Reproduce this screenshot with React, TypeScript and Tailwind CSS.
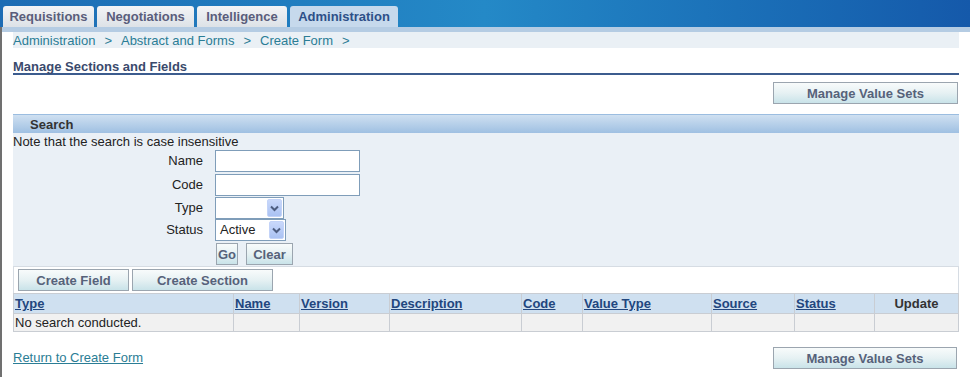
import React from "react";

const tabs = [
  { label: "Requisitions", w: "w-[91px]" },
  { label: "Negotiations", w: "w-[97px]" },
  { label: "Intelligence", w: "w-[90px]" },
];

const crumbs = ["Administration", "Abstract and Forms", "Create Form"];

const cols = [
  { label: "Type", w: "w-[219px]", link: true },
  { label: "Name", w: "w-[66px]", link: true },
  { label: "Version", w: "w-[90px]", link: true },
  { label: "Description", w: "w-[132px]", link: true },
  { label: "Code", w: "w-[61px]", link: true },
  { label: "Value Type", w: "w-[129px]", link: true },
  { label: "Source", w: "w-[83px]", link: true },
  { label: "Status", w: "w-[80px]", link: true },
  { label: "Update", w: "flex-1", link: false },
];

function Btn({ children, className = "" }: { children: React.ReactNode; className?: string }) {
  return (
    <button
      className={`h-[22px] border border-[#9ba5af] bg-linear-to-b from-[#f8fbfb] via-[#e6f1f3] to-[#c9e3e9] text-[13px] font-bold leading-none text-[#56627a] ${className}`}
    >
      {children}
    </button>
  );
}

function Select({ value, w }: { value?: string; w: string }) {
  return (
    <div className={`flex h-[22px] ${w} items-center justify-between border border-[#7f9db9] bg-white pl-[4px] pr-[1px]`}>
      <span className="text-[13px] text-[#222]">{value}</span>
      <span className="flex h-[18px] w-[15px] items-center justify-center rounded-[2px] border border-[#c3d3f8] bg-linear-to-b from-[#c9d8fb] to-[#aac2f3]">
        <svg width="9" height="7" viewBox="0 0 9 7">
          <path d="M1 1.5 L4.5 5 L8 1.5" fill="none" stroke="#4d5d80" strokeWidth="2" />
        </svg>
      </span>
    </div>
  );
}

export default function App() {
  return (
    <div className="h-[377px] w-[970px] overflow-hidden bg-white font-['Liberation_Sans',Arial,sans-serif] text-[13px] text-[#222]">
      {/* header with tabs */}
      <div className="flex h-[27px] items-end gap-[3px] bg-linear-to-r from-[#1d6cb4] via-[#2489c7] to-[#1559aa] pl-[3px]">
        {tabs.map((t) => (
          <div
            key={t.label}
            className={`flex h-[21px] ${t.w} items-center justify-center rounded-t-[3px] bg-linear-to-b from-[#f3f4f6] to-[#dde2e7] font-bold text-[#5a5d7b]`}
          >
            {t.label}
          </div>
        ))}
        <div className="flex h-[21px] w-[108px] items-center justify-center rounded-t-[3px] bg-[#c6d9ec] font-bold text-[#2d5088]">
          Administration
        </div>
      </div>
      <div className="h-[5px] border-l-2 border-[#707070] bg-[#b5cce3]" />

      <div className="h-[345px] border-l-2 border-[#707070] pl-[11px] pr-[11px]">
        {/* breadcrumb */}
        <div className="flex h-[16px] items-center bg-[#eaf0f5] pt-[1px] text-[#2b7d95]">
          {crumbs.map((c) => (
            <React.Fragment key={c}>
              <span>{c}</span>
              <span className="mx-[9px]">&gt;</span>
            </React.Fragment>
          ))}
        </div>

        {/* page heading */}
        <div className="mt-[10px] h-[17px] border-b-2 border-[#3c5c8e] font-bold leading-[17px] text-[#3a4a6c]">
          Manage Sections and Fields
        </div>

        <div className="mt-[7px] flex justify-end pr-[1px]">
          <Btn className="w-[185px]">Manage Value Sets</Btn>
        </div>

        {/* search */}
        <div className="mt-[10px]">
          <div className="h-[19px] border-t border-[#9bbde0] bg-linear-to-b from-[#cfe0f1] to-[#9fc0e2] pl-[17px] font-bold leading-[19px] text-[#333]">
            Search
          </div>
          <div className="h-[133px] bg-[#eaf0f6]">
            <div className="h-[17px] leading-[18px]">Note that the search is case insensitive</div>
            <div className="grid grid-cols-[190px_auto] items-center gap-x-[12px]">
              <div className="text-right">Name</div>
              <div className="h-[22px] w-[145px] border border-[#7f9db9] bg-white" />
              <div className="mt-[2px] text-right">Code</div>
              <div className="mt-[2px] h-[22px] w-[145px] border border-[#7f9db9] bg-white" />
              <div className="mt-[1px] text-right">Type</div>
              <div className="mt-[1px]">
                <Select w="w-[69px]" />
              </div>
              <div className="text-right">Status</div>
              <div>
                <Select value="Active" w="w-[71px]" />
              </div>
              <div />
              <div className="mt-[2px] flex gap-[8px] pl-[1px]">
                <Btn className="w-[22px]">Go</Btn>
                <Btn className="w-[47px]">Clear</Btn>
              </div>
            </div>
          </div>
        </div>

        {/* results */}
        <div className="flex h-[27px] items-center gap-[3px] border-x border-t border-[#d6dce3] bg-white pl-[4px]">
          <Btn className="w-[111px]">Create Field</Btn>
          <Btn className="w-[141px]">Create Section</Btn>
        </div>
        <div className="border border-[#c9cdd3]">
          <div className="flex h-[19px] bg-[#cfe0f0]">
            {cols.map((c, i) => (
              <div
                key={c.label}
                className={`${c.w} ${i > 0 ? "border-l border-[#c9cdd3]" : ""} flex items-center font-bold ${
                  c.link ? "pl-[1px] text-[#22467e] underline" : "justify-center text-[#333]"
                }`}
              >
                {c.label}
              </div>
            ))}
          </div>
          <div className="flex h-[18px] border-t border-[#c9cdd3] bg-[#f1f1f1]">
            {cols.map((c, i) => (
              <div
                key={c.label}
                className={`${c.w} ${i > 0 ? "border-l border-[#c9cdd3]" : ""} flex items-center pl-[1px]`}
              >
                {i === 0 ? "No search conducted." : ""}
              </div>
            ))}
          </div>
        </div>

        {/* footer */}
        <div className="mt-[15px] flex items-center justify-between pr-[2px]">
          <a className="text-[#2b7d95] underline">Return to Create Form</a>
          <Btn className="w-[184px]">Manage Value Sets</Btn>
        </div>
      </div>
    </div>
  );
}
